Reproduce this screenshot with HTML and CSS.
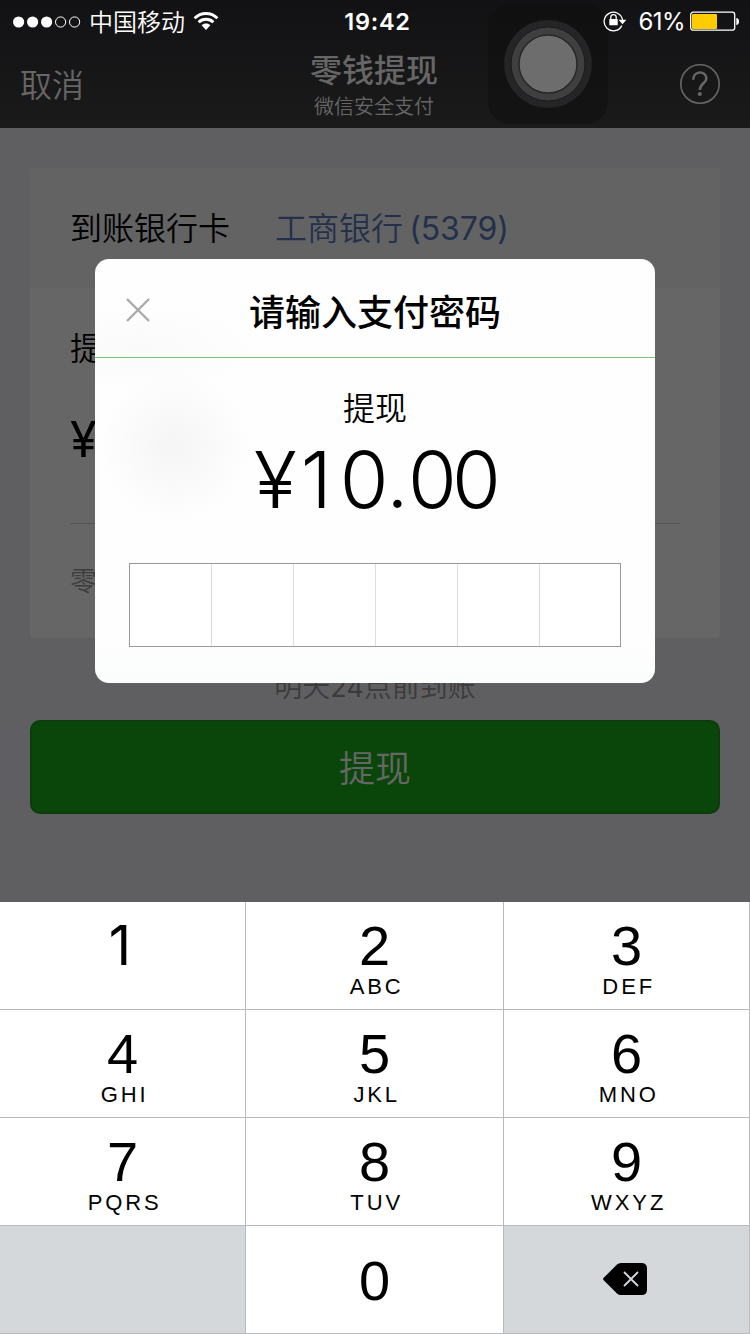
FILE: index.html
```html
<!DOCTYPE html>
<html lang="zh-CN">
<head>
<meta charset="utf-8">
<title>零钱提现</title>
<link rel="stylesheet" href="styles.css">
</head>
<body>
<div class="phone">
  <header class="header">
    <div class="status">
      <div class="status-left">
        <svg class="signal" width="68" height="12" viewBox="0 0 68 12">
          <g fill="#fff"><circle cx="5.6" cy="6" r="5.6"/><circle cx="19.6" cy="6" r="5.6"/><circle cx="33.6" cy="6" r="5.6"/></g>
          <g fill="none" stroke="#fff"><circle cx="47.6" cy="6" r="5.1"/><circle cx="61.6" cy="6" r="5.1"/></g>
        </svg>
        <span class="carrier">中国移动</span>
        <svg class="wifi" width="26" height="20" viewBox="0 0 26 20">
          <g fill="none" stroke="#fff" stroke-width="2.9"><path d="M1.6 7.2C8 .9 18 .9 24.400 7.200"/><path d="M5.600 11.200C9.800 7.300 16.200 7.300 20.400 11.200"/></g>
          <path d="M8.600 14.300C11 12 15 12 17.400 14.300L13 18.900Z" fill="#fff"/>
        </svg>
      </div>
      <span class="clock">19:42</span>
      <div class="status-right">
        <svg class="lock" width="24" height="22" viewBox="0 0 24 22">
          <path d="M18.800 15.600A9.300 9.300 0 1 1 19.600 10" fill="none" stroke="#fff" stroke-width="1.300"/>
          <path d="M15.600 9.700H23.400L19.500 14.200Z" fill="#fff"/>
          <rect x="6.300" y="9" width="8.400" height="6.200" rx=".5" fill="#fff"/>
          <path d="M7.800 9.500V7.300A2.700 2.700 0 0 1 13.200 7.300V9.500" fill="none" stroke="#fff" stroke-width="1.300"/>
        </svg>
        <span class="percent">61%</span>
        <svg class="battery" width="50" height="20" viewBox="0 0 50 20">
          <rect x=".7" y="1.200" width="44" height="18" rx="2.500" fill="none" stroke="#fff" stroke-width="1.300"/>
          <rect x="2" y="3" width="25" height="15" rx="1" fill="#fc0"/>
          <path d="M46.300 7C48 7 49 8.500 49 10.500S48 14 46.300 14Z" fill="#fff"/>
        </svg>
      </div>
    </div>
    <nav class="nav">
      <span class="cancel">取消</span>
      <div class="titles">
        <h1 class="title">零钱提现</h1>
        <p class="subtitle">微信安全支付</p>
      </div>
      <svg class="help" width="40" height="40" viewBox="0 0 40 40" fill="none" stroke="#666">
        <circle cx="20" cy="20" r="19.200" stroke-width="1.600"/>
        <path d="M13.200 15.800C13.200 6.400 26.400 6.400 26.400 14.400C26.400 19.200 19.800 19.400 19.800 26" stroke-width="2.600"/>
        <circle cx="19.800" cy="30" r="2.100" fill="#666" stroke="none"/>
      </svg>
    </nav>
    <div class="assistive"><svg width="120" height="120" viewBox="0 0 120 120">
      <circle cx="60" cy="60" r="44" fill="#252527"/>
      <circle cx="60" cy="60" r="37" fill="#3f3f40" stroke="#1b1b1c" stroke-width="1"/>
      <circle cx="60" cy="60" r="29" fill="#6d6d6e" stroke="#272728" stroke-width="1.500"/>
    </svg></div>
  </header>

  <main class="content">
    <section class="card">
      <div class="bank-row"><span>到账银行卡</span><span class="bank">工商银行 <span class="digits">(5379)</span></span></div>
      <div class="form">
        <div class="label">提现金额</div>
        <div class="currency">¥</div>
        <div class="balance">零钱余额</div>
      </div>
    </section>
    <p class="arrival">明天<span class="hour">24</span>点前到账</p>
    <div class="submit">提现</div>
  </main>

  <div class="keypad">
    <div class="key"><b class="one">1</b></div>
    <div class="key"><b>2</b><i>ABC</i></div>
    <div class="key"><b>3</b><i>DEF</i></div>
    <div class="key"><b>4</b><i>GHI</i></div>
    <div class="key"><b>5</b><i>JKL</i></div>
    <div class="key"><b>6</b><i>MNO</i></div>
    <div class="key"><b>7</b><i>PQRS</i></div>
    <div class="key"><b>8</b><i>TUV</i></div>
    <div class="key"><b>9</b><i>WXYZ</i></div>
    <div class="key blank"></div>
    <div class="key zero"><b>0</b></div>
    <div class="key blank erase">
      <svg width="44" height="32" viewBox="0 0 44 32">
        <path d="M.7 14.800L14 1.600Q15.600 0 18 0H38.500Q44 0 44 5.500V26.500Q44 32 38.500 32H18Q15.600 32 14 30.400L.7 17.200Q-.5 16 .7 14.800Z"/>
        <path d="M21 9L35 23M35 9L21 23" stroke="#d4d8db" stroke-width="1.800"/>
      </svg>
    </div>
  </div>

  <div class="dialog">
    <div class="dialog-head">
      <svg class="close" width="24" height="24" viewBox="0 0 24 24"><path d="M1 1L23 23M23 1L1 23" stroke="#aaa" stroke-width="2.400"/></svg>
      <h2 class="dialog-title">请输入支付密码</h2>
    </div>
    <div class="dialog-body">
      <div class="action">提现</div>
      <div class="amount"><span class="yen">¥</span><span class="tens">1</span><span class="point">0.</span>00</div>
      <div class="pin"><span></span><span></span><span></span><span></span><span></span><span></span></div>
    </div>
  </div>
</div>
</body>
</html>
```
FILE: styles.css
```css
* { box-sizing: border-box; }
body { margin: 0; }
h1, h2, p { margin: 0; font-weight: inherit; }
svg { display: block; flex: none; }
.phone {
  position: relative;
  display: flex;
  flex-direction: column;
  width: 750px;
  height: 1334px;
  overflow: hidden;
  background: #5f5f61;
  font-family: "Noto Sans CJK SC", sans-serif;
  font-weight: 350;
}
.header {
  position: relative;
  height: 128px;
  background: linear-gradient(#121214, #1a1a1b);
}
.status {
  position: relative;
  z-index: 1;
  display: grid;
  grid-template-columns: 1fr auto 1fr;
  align-items: center;
  height: 40px;
  padding: 0 10px 0 13px;
  color: #fff;
}
.status-left, .status-right { display: flex; align-items: center; }
.status-right { justify-content: flex-end; }
.signal { margin-top: 1px; }
.carrier { margin: -1px 8px 0 8px; font-size: 24px; line-height: 40px; }
.wifi { margin-top: -1px; }
.clock { padding: 2px 0 0 2px; font: 600 23.500px/40px Inter, sans-serif; letter-spacing: .7px; }
.lock { margin-top: 0; }
.percent { margin: 0 5px 0 12px; padding-top: 2px; font: 400 24px/40px Inter, sans-serif; letter-spacing: -.6px; }
.battery { margin-top: -1px; }
.nav {
  display: grid;
  grid-template-columns: 1fr auto 1fr;
  align-items: center;
  height: 88px;
  padding: 0 30px 0 20px;
  color: #666;
}
.cancel { font-size: 32px; line-height: 48px; padding-bottom: 3px; }
.titles { margin: -2px -4px 0 4px; text-align: center; }
.title { font-size: 32px; line-height: 44px; font-weight: 500; }
.subtitle { margin-top: 2px; font-size: 20px; line-height: 28px; }
.help { justify-self: end; }
.assistive {
  position: absolute;
  left: 488px;
  top: 4px;
  width: 120px;
  height: 120px;
  border-radius: 22px;
  background: rgba(14, 14, 14, .5);
}
.content { flex: 1; padding: 40px 30px 0; }
.card { height: 470px; border-radius: 4px; overflow: hidden; background: #666; color: #000; }
.bank-row {
  display: flex;
  gap: 45px;
  height: 120px;
  padding-left: 40px;
  background: #636363;
  font-size: 32px;
  line-height: 116px;
}
.bank { color: #23304c; }
.digits { font: 400 32px/1 Inter, sans-serif; letter-spacing: -.1px; margin-left: -1px; }
.form { padding: 34px 40px 0; }
.label { font-size: 32px; line-height: 48px; }
.currency {
  height: 154px;
  padding-top: 41px;
  border-bottom: 1px solid #555;
  font: 400 49px/58px Inter, sans-serif;
}
.balance { padding-top: 36px; font-size: 27px; line-height: 40px; color: #3d3d3d; }
.arrival { padding-top: 27px; height: 82px; font-size: 28px; line-height: 40px; text-align: center; color: #3b3b3c; }
.hour { font: 400 27px/1 Inter, sans-serif; }
.submit {
  height: 94px;
  border: 2px solid #0b3c0c;
  border-radius: 10px;
  background: #0a460a;
  color: #666;
  font-size: 36px;
  line-height: 88px;
  text-align: center;
}
.keypad {
  display: grid;
  grid-template-columns: 246px 258px 246px;
  grid-template-rows: repeat(4, 108px);
  background: #fff;
}
.key {
  display: flex;
  flex-direction: column;
  align-items: center;
  padding-top: 12px;
  border-right: 1px solid #b8bbbe;
  border-bottom: 1px solid #b8bbbe;
  color: #000;
}
.key b { font: 400 56px/64px "Liberation Sans", sans-serif; }
.key .one { font: 400 55px/62px Inter, sans-serif; margin-left: -5px; }
.key i { margin: -4px -4.400px 0 0; font: 400 22px/26px "Liberation Sans", sans-serif; letter-spacing: 2.900px; }
.key.zero, .key.blank { justify-content: center; padding-top: 0; }
.key.zero { padding-top: 2px; }
.key.blank { background: #d4d8db; }
.key.erase { padding: 0 3px 2px 0; }
.dialog {
  position: absolute;
  left: 95px;
  top: 259px;
  width: 560px;
  height: 424px;
  border-radius: 14px;
  background:
    radial-gradient(ellipse 75px 75px at 80px 188px, #f5f5f5, rgba(254, 254, 254, 0)),
    radial-gradient(ellipse 120px 45px at 45px 90px, #fafafa, rgba(254, 254, 254, 0)),
    linear-gradient(#fefefe 90%, #fbfcfc);
  color: #000;
}
.dialog-head {
  display: grid;
  grid-template-columns: 1fr auto 1fr;
  align-items: center;
  height: 99px;
  padding: 0 31px;
  border-bottom: 1px solid #7cc47f;
}
.close { margin-top: 4px; }
.dialog-title { font-size: 36px; line-height: 54px; font-weight: 500; padding-top: 3px; }
.dialog-body { display: flex; flex-direction: column; align-items: center; padding-top: 24px; }
.action { font-size: 32px; line-height: 48px; }
.amount { height: 97px; font: 300 79px/98px Inter, sans-serif; letter-spacing: -4.800px; white-space: nowrap; }
.yen { letter-spacing: 4px; }
.tens { letter-spacing: 8px; }
.point { letter-spacing: -.5px; }
.pin {
  display: grid;
  grid-template-columns: repeat(5, 82px) 80px;
  width: 492px;
  height: 84px;
  margin-top: 36px;
  border: 1px solid #999;
  background: #fff;
}
.pin span + span { border-left: 1px solid #ddd; margin-left: -1px; }
```
